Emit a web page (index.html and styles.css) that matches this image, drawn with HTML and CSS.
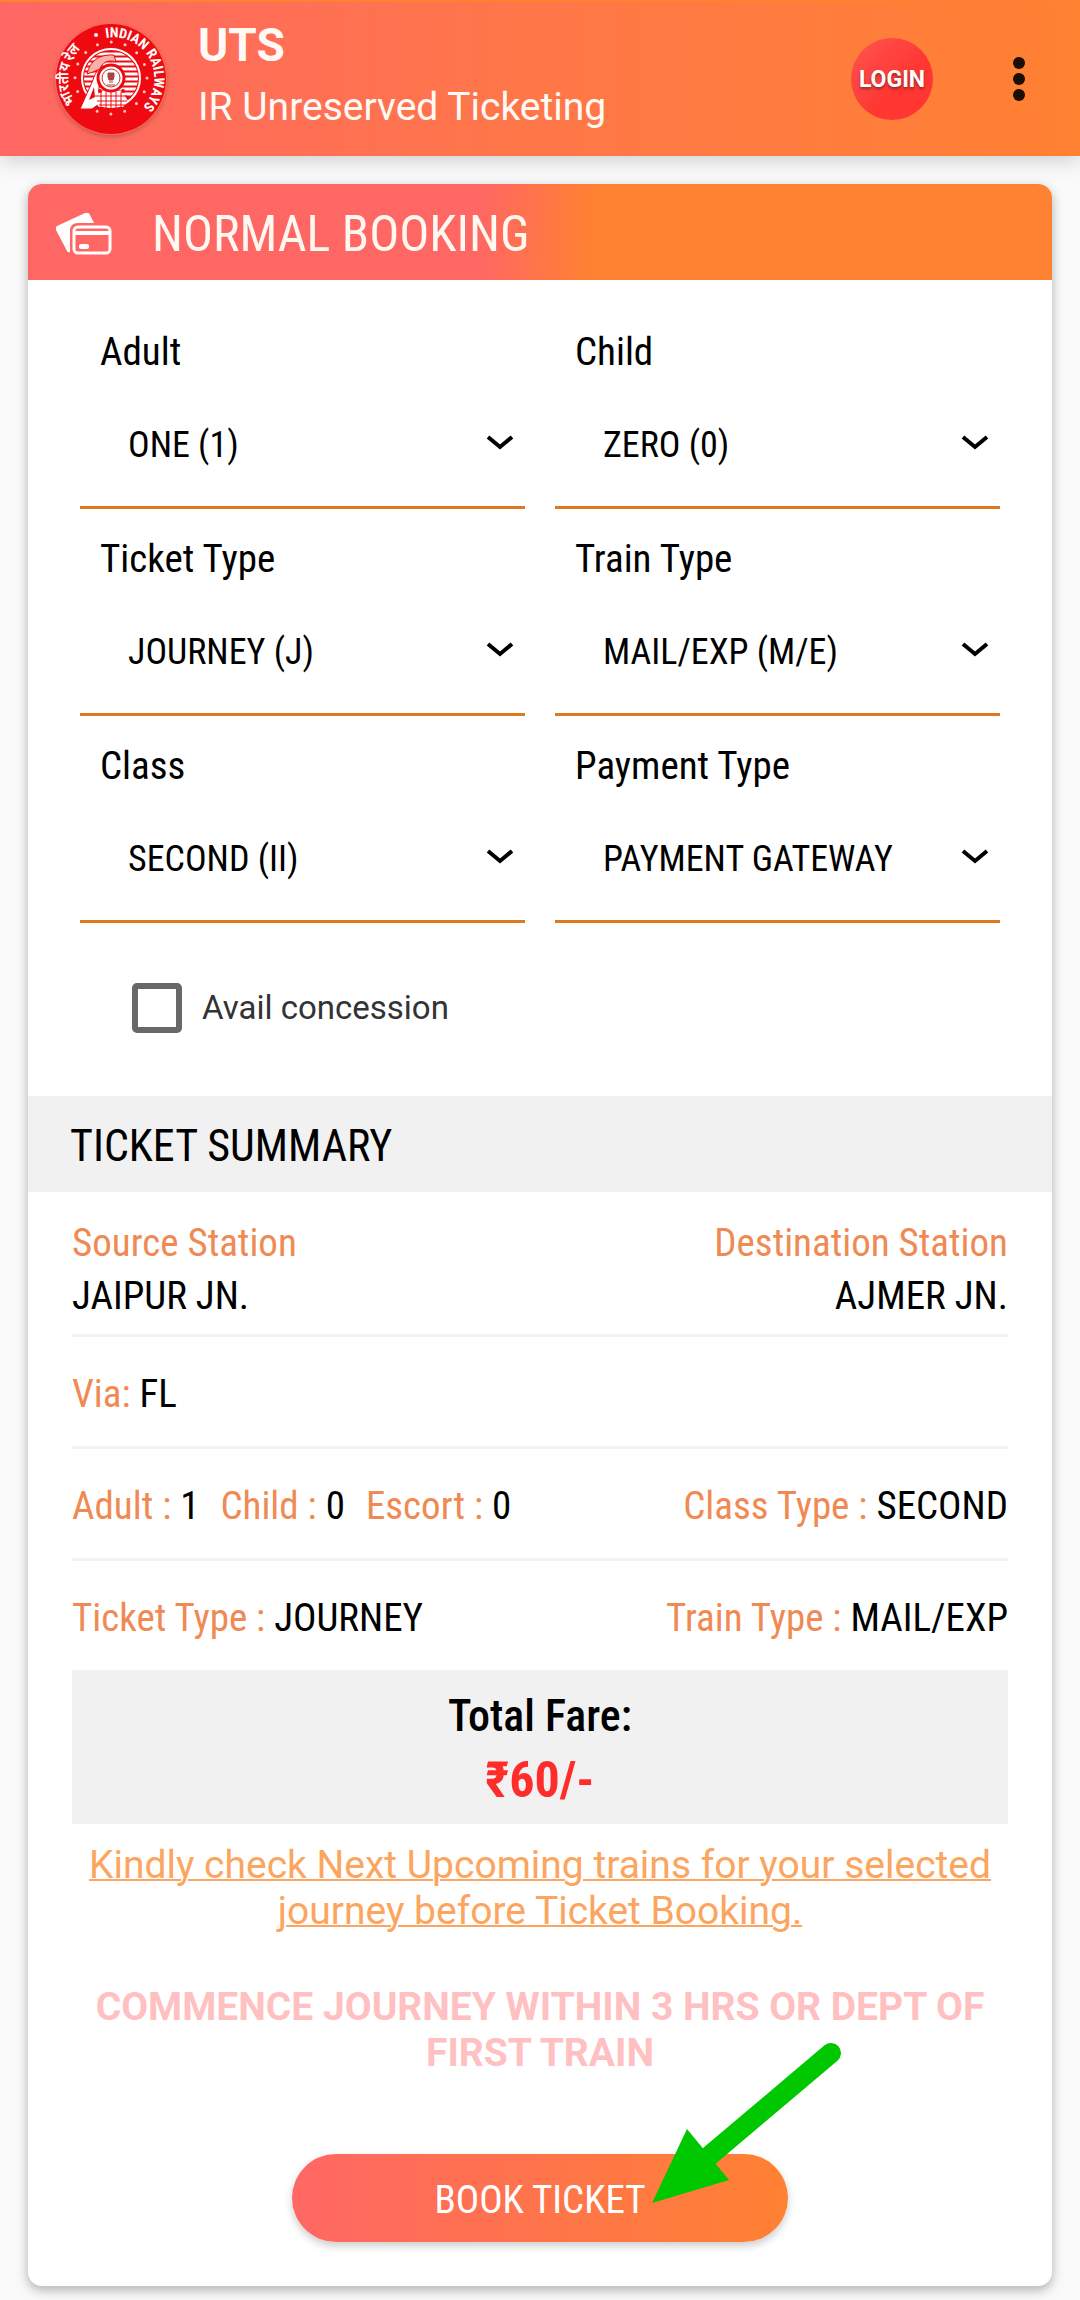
FILE: index.html
```
<!DOCTYPE html>
<html lang="en">
<head>
  <meta charset="UTF-8" />
  <meta name="viewport" content="width=device-width, initial-scale=1.0" />
  <title>UTS - Normal Booking</title>
  <link rel="stylesheet" href="styles.css">
</head>
<body>
  <header class="topbar">
    <svg class="logo" viewBox="0 0 112 112" role="img" aria-label="Indian Railways">
      <defs>
        <path id="ring-left" d="M20 80 A42 42 0 0 1 48 15" />
        <path id="ring-right" d="M51 15 A41 41 0 0 1 72 94" />
        <clipPath id="disc"><circle cx="56" cy="55" r="27" /></clipPath>
      </defs>
      <circle cx="56" cy="56" r="55" fill="#ee0a10" />
      <circle cx="56" cy="55" r="36" fill="none" stroke="#ffc4c0" stroke-width="3" stroke-linecap="round" stroke-dasharray="0 14.137" />
      <circle cx="56" cy="55" r="29" fill="#ee0a10" stroke="#fff" stroke-width="2" />
      <g clip-path="url(#disc)">
        <path d="M25 31h62M25 36h62M25 41h62M25 46h62M25 51h62M25 56h62M25 61h62M25 66h62M25 71h62" stroke="#fff" stroke-width="3" />
      </g>
      <path d="M32 51c3-13 12-20 27-19l2 7c-8-3-14 1-16 7l-7 3z" fill="#f9b0a8" stroke="#ee0a10" />
      <path d="M25 86l13-29c2-7 5-11 10-13l-4 17v20l-7 5z" fill="#fff" stroke="#ee0a10" />
      <path d="M34 77l5-13 1 10z" fill="#ee0a10" />
      <path d="M45 68h22l6 10-5 6H44l-5-6z" fill="#fff" />
      <path d="M40 73h32M42 78h30M44 82h26M46 69v16M51 69v16M56 69v16M61 69v16M66 69v16" stroke="#ee0a10" />
      <circle cx="56" cy="55" r="13" fill="#fff" stroke="#ee0a10" stroke-width="3" />
      <circle cx="56" cy="55" r="9" fill="#fff" stroke="#c33" />
      <path d="M53 50h6v4l-1 3h-4l-1-3zM54 59h4M52 62h8" fill="#a44" stroke="#a44" />
      <circle cx="45" cy="68" r="2" fill="#ee0a10" />
      <circle cx="68" cy="68" r="2" fill="#ee0a10" />
      <circle cx="41" cy="12" r="2" fill="#fff" />
      <text class="ring-text"><textPath href="#ring-left">भारतीय रेल</textPath></text>
      <text class="ring-text"><textPath href="#ring-right">INDIAN RAILWAYS</textPath></text>
    </svg>
    <div class="brand">
      <h1>UTS</h1>
      <p>IR Unreserved Ticketing</p>
    </div>
    <button type="button" class="login">LOGIN</button>
    <button type="button" class="menu" aria-label="Menu">
      <svg viewBox="0 0 12 46"><circle cx="6" cy="7" r="6" /><circle cx="6" cy="23" r="6" /><circle cx="6" cy="39" r="6" /></svg>
    </button>
  </header>

  <main class="card">
    <div class="card-title">
      <svg class="cards-icon" viewBox="0 0 56 42">
        <path d="M1 13L29 0q4-1 5 2l4 8H22q-8 0-8 8v21q-2 1-3-1L0 17q-1-3 1-4z" fill="#fff" />
        <rect x="18" y="14" width="36" height="26" rx="4" fill="none" stroke="#fff" stroke-width="3" />
        <path d="M18 20h36" stroke="#fff" stroke-width="4" />
        <rect x="23" y="31" width="10" height="5" rx="2" fill="#fff" />
      </svg>
      <h2>NORMAL BOOKING</h2>
    </div>

    <form id="booking-form">
      <div class="fields">
        <div class="field">
          <label for="adult">Adult</label>
          <select id="adult"><option>ONE (1)</option></select>
        </div>
        <div class="field">
          <label for="child">Child</label>
          <select id="child"><option>ZERO (0)</option></select>
        </div>
        <div class="field">
          <label for="ticket-type">Ticket Type</label>
          <select id="ticket-type"><option>JOURNEY (J)</option></select>
        </div>
        <div class="field">
          <label for="train-type">Train Type</label>
          <select id="train-type"><option>MAIL/EXP (M/E)</option></select>
        </div>
        <div class="field">
          <label for="class">Class</label>
          <select id="class"><option>SECOND (II)</option></select>
        </div>
        <div class="field">
          <label for="payment-type">Payment Type</label>
          <select id="payment-type"><option>PAYMENT GATEWAY</option></select>
        </div>
      </div>
      <div class="concession">
        <input type="checkbox" id="concession">
        <label for="concession">Avail concession</label>
      </div>
    </form>

    <h3 class="section-title">TICKET SUMMARY</h3>

    <div class="summary">
      <div class="row stations">
        <p><span>Source Station</span><br>JAIPUR JN.</p>
        <p><span>Destination Station</span><br>AJMER JN.</p>
      </div>
      <div class="row">
        <p><span>Via:</span> FL</p>
      </div>
      <div class="row">
        <div class="counts">
          <p><span>Adult :</span> 1</p>
          <p><span>Child :</span> 0</p>
          <p><span>Escort :</span> 0</p>
        </div>
        <p><span>Class Type :</span> SECOND</p>
      </div>
      <div class="row last">
        <p><span>Ticket Type :</span> JOURNEY</p>
        <p><span>Train Type :</span> MAIL/EXP</p>
      </div>
      <div class="fare">
        <p>Total Fare:</p>
        <strong>₹60/-</strong>
      </div>
    </div>

    <a class="upcoming" href="#">Kindly check Next Upcoming trains for your selected journey before Ticket Booking.</a>
    <p class="commence">COMMENCE JOURNEY WITHIN 3 HRS OR DEPT OF FIRST TRAIN</p>

    <div class="actions">
      <button type="submit" form="booking-form" class="book">BOOK TICKET</button>
      <!-- pointer over the book button -->
      <svg class="arrow" viewBox="0 0 190 162">
        <path d="M179 11L56 115" stroke="#00c800" stroke-width="20" stroke-linecap="round" />
        <path d="M0 161L35 87 77 138z" fill="#00c800" />
      </svg>
    </div>
  </main>
</body>
</html>
```
FILE: styles.css
```
:root {
  --pink: #ff6764;
  --orange: #ff8132;
  --label: #f08a54;
  --line: #f3f3f3;
  --panel: #f1f1f1;
  --condensed: "Roboto Condensed", Roboto, sans-serif;
}

* {
  box-sizing: border-box;
}
body {
  margin: 0;
  background: #fafafa;
  color: #000;
  font-family: var(--condensed);
  font-size: 39px;
  line-height: 53px;
}
h1, h2, h3, p {
  margin: 0;
  font-weight: 400;
}
button {
  border: 0;
  color: #fff;
  font-family: inherit;
  cursor: pointer;
}

/* top bar */
.topbar {
  display: flex;
  align-items: center;
  height: 156px;
  padding: 0 55px;
  border-top: 2px solid var(--orange);
  background: linear-gradient(90deg, var(--pink), #ff7748 50%, var(--orange));
  box-shadow: 0 4px 20px #0000002e;
}
.logo {
  width: 112px;
  height: 112px;
  margin-right: 31px;
  border-radius: 50%;
  box-shadow: 0 2px 4px #0003;
}
.ring-text {
  fill: #fff;
  font: 700 14px var(--condensed);
}
.brand {
  flex: 1;
  padding-bottom: 6px;
  color: #fffaf5;
  font-family: Roboto, sans-serif;
  line-height: 62px;
}
.brand h1 {
  font-size: 46px;
  font-weight: 700;
}
.login {
  width: 82px;
  height: 82px;
  margin-right: 80px;
  padding: 0;
  border-radius: 50%;
  background: linear-gradient(135deg, #ff5550, #ff3632 60%);
  font: 700 23px Roboto, sans-serif;
  text-shadow: 0 2px 3px #0006;
}
.menu {
  padding: 0;
  background: none;
}
.menu svg {
  display: block;
  width: 12px;
  height: 46px;
  fill: #1c0d05;
}

/* card */
.card {
  margin: 28px 28px 14px;
  border-radius: 14px;
  background: #fff;
  box-shadow: 0 4px 12px #0000004d;
  overflow: hidden;
}
.card-title {
  display: flex;
  align-items: center;
  gap: 40px;
  height: 96px;
  padding: 4px 28px 0;
  background: linear-gradient(92deg, var(--pink) 44%, var(--orange) 55%);
  color: #fff8f0;
}
.card-title h2 {
  font-size: 50px;
}
.cards-icon {
  width: 56px;
  height: 42px;
}

.fields {
  display: grid;
  grid-template-columns: 1fr 1fr;
  column-gap: 30px;
  padding: 22px 52px 0;
}
.field label {
  display: block;
  padding: 24px 20px 0;
}
.field select {
  display: block;
  width: 100%;
  height: 130px;
  padding: 4px 48px 0;
  border: 0;
  border-bottom: 3px solid #dc7a20;
  border-radius: 0;
  appearance: none;
  background: url("data:image/svg+xml,%3Csvg xmlns='http://www.w3.org/2000/svg' viewBox='0 0 28 18'%3E%3Cpath d='M2 3l12 10L26 3' fill='none' stroke='%23000' stroke-width='4'/%3E%3C/svg%3E") no-repeat right 11px center / 28px 18px;
  color: #000;
  font-family: inherit;
  font-size: 36px;
}
.concession {
  display: flex;
  align-items: center;
  gap: 20px;
  height: 173px;
  padding: 0 104px 4px;
  color: #333;
  font-family: Roboto, sans-serif;
  font-size: 33px;
}
.concession input {
  width: 50px;
  height: 50px;
  margin: 0;
  border: 6px solid #686868;
  border-radius: 5px;
  appearance: none;
}
.concession input:checked {
  background: var(--orange);
}

.section-title {
  padding: 4px 42px 0;
  background: var(--panel);
  font-size: 44px;
  line-height: 92px;
}
.summary {
  padding: 0 44px;
}
.row {
  display: flex;
  align-items: center;
  justify-content: space-between;
  height: 112px;
  padding-top: 6px;
  border-bottom: 3px solid var(--line);
}
.row.stations {
  height: 145px;
  padding-top: 14px;
}
.row.last {
  height: 109px;
  border-bottom: 0;
}
.row p + p {
  text-align: right;
}
.row span {
  color: var(--label);
}
.counts {
  display: flex;
  gap: 21px;
}
.fare {
  height: 154px;
  padding-top: 14px;
  background: var(--panel);
  font-size: 44px;
  line-height: 64px;
  text-align: center;
}
.fare p {
  font-weight: 500;
}
.fare strong {
  color: #ff2c2c;
  font-size: 50px;
}

.upcoming, .commence {
  display: block;
  padding: 18px 44px 0;
  font-family: Roboto, sans-serif;
  line-height: 46px;
  text-align: center;
}
.upcoming {
  color: #fba560;
  text-decoration-thickness: 2px;
}
.commence {
  margin-top: 32px;
  color: #ffc0c2;
  font-weight: 700;
}
.actions {
  position: relative;
  width: 496px;
  margin: 78px auto 44px;
}
.book {
  display: block;
  width: 100%;
  height: 88px;
  padding-top: 4px;
  border-radius: 44px;
  background: linear-gradient(90deg, var(--pink), var(--orange));
  box-shadow: 0 4px 8px #0003;
  font-size: 39px;
}
.arrow {
  position: absolute;
  right: -54px;
  bottom: 38px;
  width: 190px;
  height: 162px;
  pointer-events: none;
}
```
